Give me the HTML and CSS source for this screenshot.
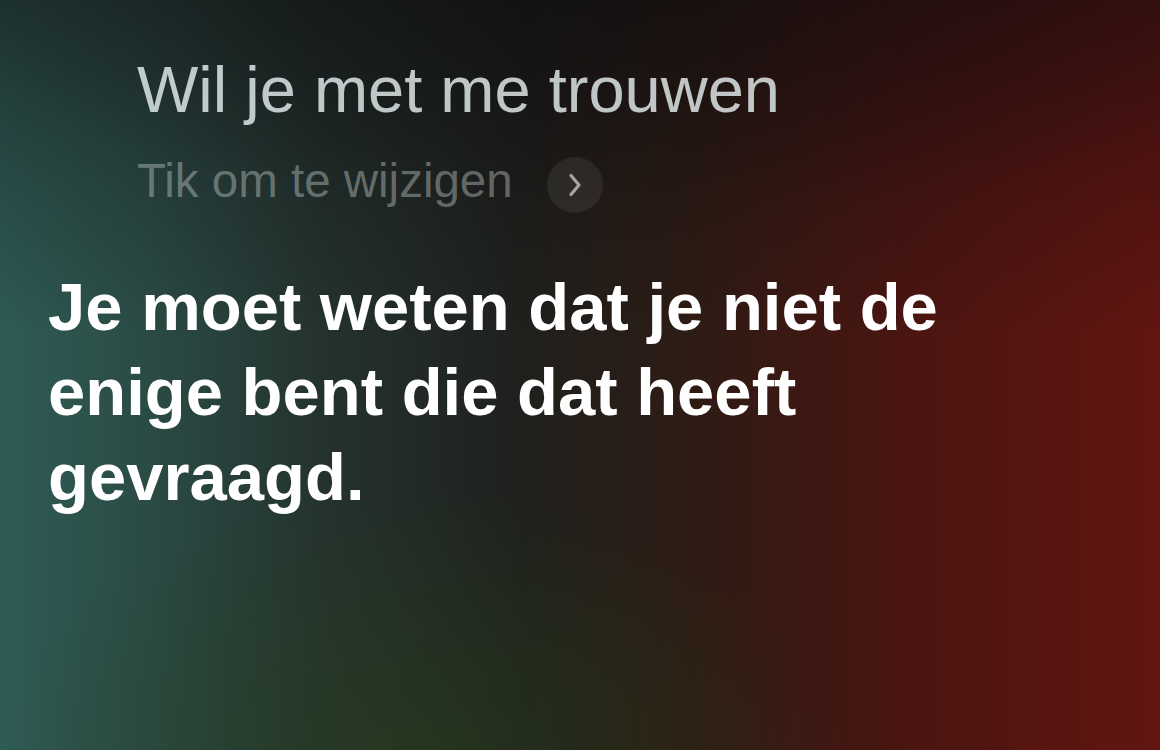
FILE: index.html
```html
<!DOCTYPE html>
<html lang="nl">
<head>
    <meta charset="UTF-8">
    <title>Siri</title>
    <link rel="stylesheet" href="styles.css">
</head>
<body>
    <div id="screen">
        <div class="query">
            <p class="query-text">Wil je met me trouwen</p>
            <div class="edit-row">
                <span class="edit-text">Tik om te wijzigen</span>
                <span class="edit-btn">
                    <svg width="16" height="26" viewBox="0 0 16 26">
                        <path d="M4 3.5 L12 13 L4 22.5" fill="none" stroke="#a5a5a5" stroke-width="3.2" stroke-linecap="round" stroke-linejoin="round"/>
                    </svg>
                </span>
            </div>
        </div>
        <p class="answer">Je moet weten dat je niet de enige bent die dat heeft gevraagd.</p>
    </div>
</body>
</html>
```
FILE: styles.css
```css
*{
    margin: 0;
    padding: 0;
}
html,body{
    width: 100%;
    height: 100%;
    overflow: hidden;
}
body{
    font-family: "Liberation Sans", Arial, sans-serif;
    background: #1a1a1a;
}
#screen{
    width: 1160px;
    height: 750px;
    box-sizing: border-box;
    padding: 54px 0 0 48px;
    background:
        linear-gradient(180deg, rgba(12,10,12,0.5) 0%, rgba(12,10,12,0.2) 25%, rgba(12,10,12,0) 45%),
        radial-gradient(ellipse 700px 220px at 55% 0%, rgba(14,14,16,0.35), rgba(14,14,16,0) 100%),
        radial-gradient(ellipse 420px 260px at 36% 100%, rgba(40,64,26,0.55), rgba(40,64,26,0) 100%),
        linear-gradient(90deg, #2f5b55 0%, #2b4c46 12%, #24322e 28%, #1f201d 45%, #2e1b14 60%, #4a1511 78%, #621511 100%);
}
.query{
    padding-left: 89px;
}
.query-text{
    font-size: 65px;
    line-height: 72px;
    color: rgba(228,238,238,0.82);
}
.edit-row{
    display: flex;
    align-items: flex-start;
    margin-top: 31px;
}
.edit-text{
    font-size: 47.5px;
    line-height: 48px;
    color: rgba(200,210,210,0.42);
}
.edit-btn{
    width: 56px;
    height: 56px;
    margin-left: 34px;
    border-radius: 50%;
    background: rgba(255,255,255,0.07);
    display: flex;
    align-items: center;
    justify-content: center;
}
.answer{
    width: 980px;
    margin-top: 51px;
    font-size: 67px;
    line-height: 85px;
    font-weight: bold;
    color: #fff;
}
```
